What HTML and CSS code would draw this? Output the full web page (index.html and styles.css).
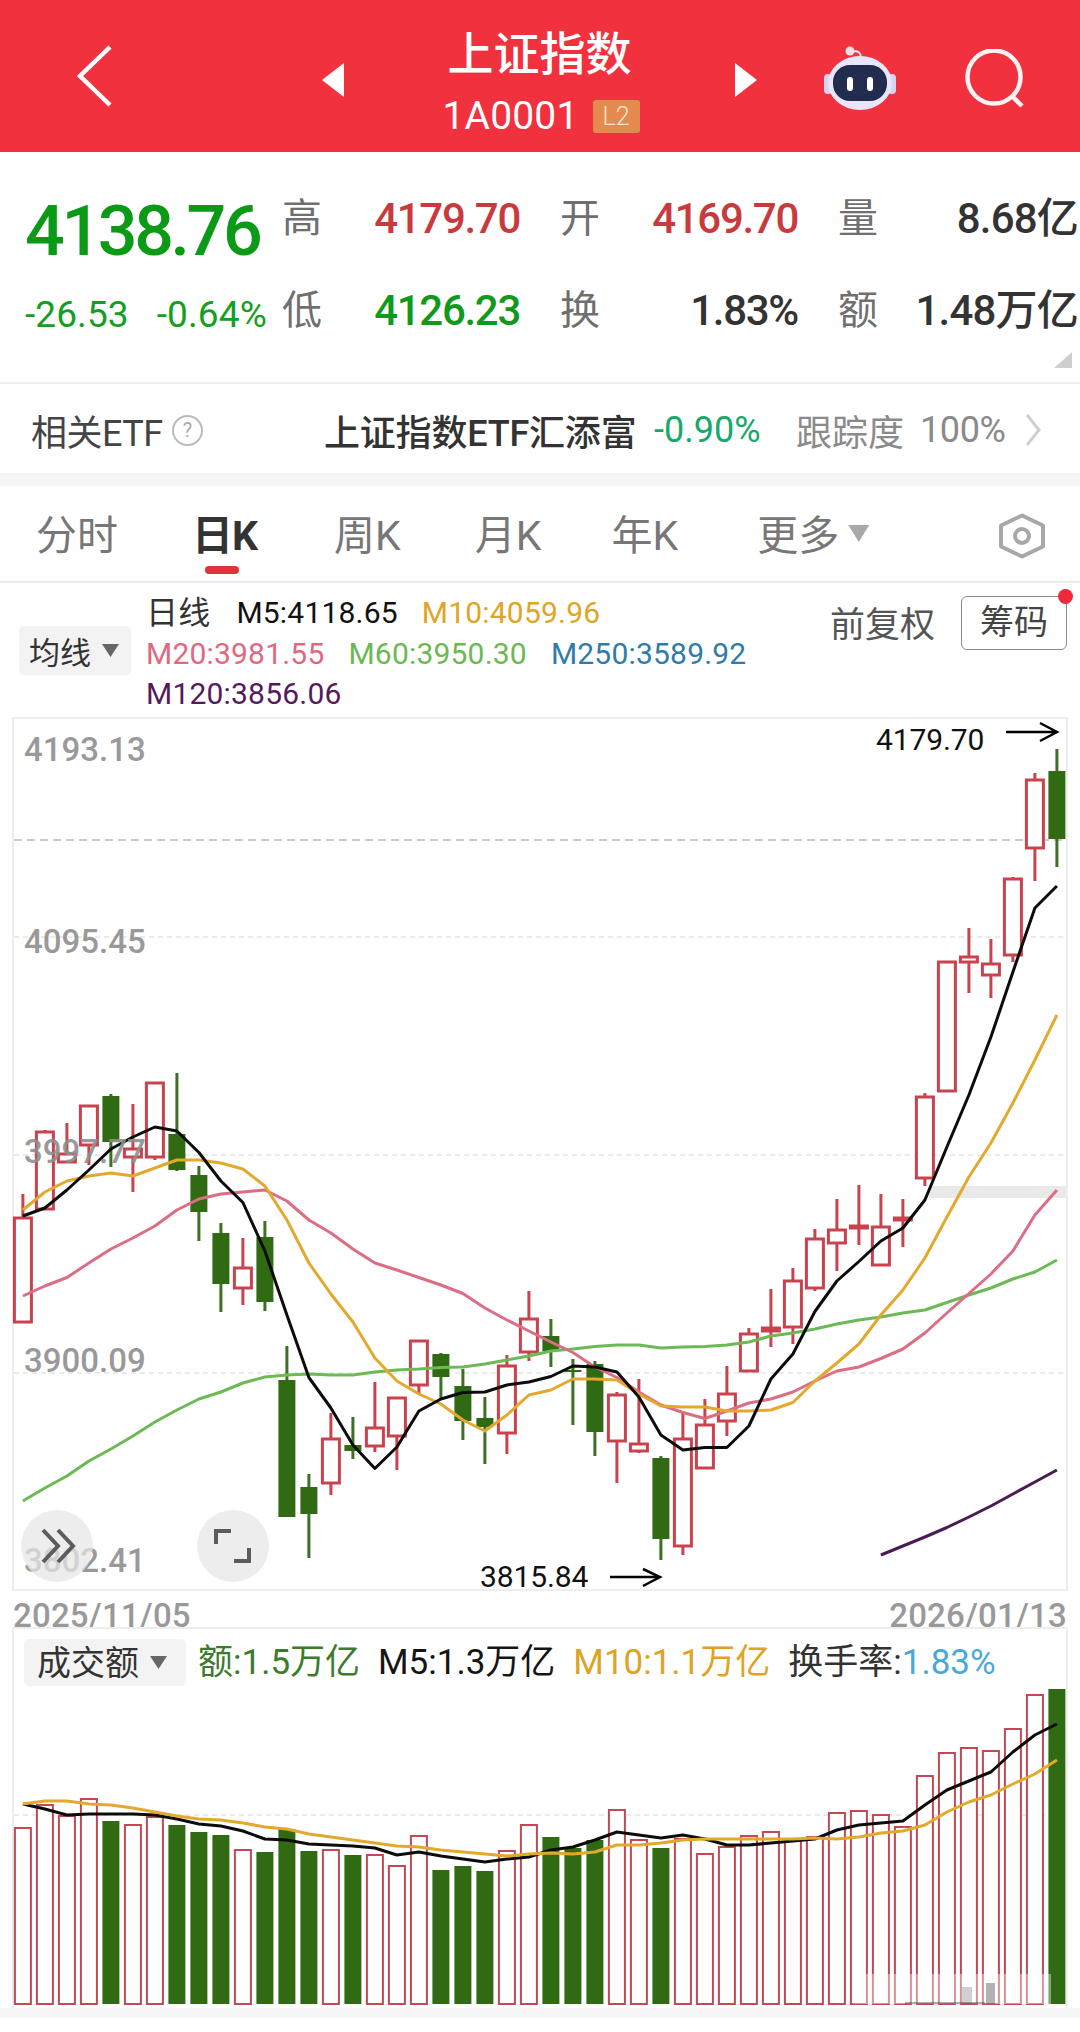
FILE: index.html
```html
<!DOCTYPE html>
<html lang="zh-CN">
<head>
  <meta charset="UTF-8" />
  <meta name="viewport" content="width=device-width, initial-scale=1.0" />
  <title>上证指数 1A0001</title>
  <link rel="stylesheet" href="styles.css">
</head>
<body>
  <header class="topbar">
    <svg class="back-icon" width="35" height="62" viewBox="0 0 35 62"><path d="M33 2 L3 31 L33 60" /></svg>
    <span class="nav-tri nav-tri-left"></span>
    <div class="title-box">
      <div class="title">上证指数</div>
      <div class="subtitle"><span>1A0001</span><span class="badge">L2</span></div>
    </div>
    <span class="nav-tri nav-tri-right"></span>
    <svg class="robot-icon" width="72" height="64" viewBox="0 0 72 64">
      <path d="M28 6 q9 -3 9 7" fill="none" stroke="#f1e9f2" stroke-width="2" />
      <circle cx="26" cy="5" r="4.5" fill="#f3dfe6" />
      <rect x="0" y="28" width="8" height="20" rx="4" fill="#d9d3f2" />
      <rect x="64" y="28" width="8" height="20" rx="4" fill="#d9d3f2" />
      <ellipse cx="36" cy="37" rx="32" ry="27" fill="#e9e6fa" />
      <rect x="9" y="19" width="54" height="36" rx="17" fill="#212c4f" />
      <rect x="23" y="31" width="6" height="14" rx="3" fill="#fff" />
      <rect x="43" y="31" width="6" height="14" rx="3" fill="#fff" />
    </svg>
    <svg class="search-icon" width="60" height="60" viewBox="0 0 60 60">
      <circle cx="29" cy="28" r="26.5" />
      <path d="M47 47 L57 57" />
    </svg>
  </header>

  <section class="quote">
    <div class="price-box">
      <div class="price">4138.76</div>
      <div class="change"><span>-26.53</span><span>-0.64%</span></div>
    </div>
    <div class="stats">
      <div class="stat"><span class="stat-name">高</span><span class="up">4179.70</span></div>
      <div class="stat"><span class="stat-name">开</span><span class="up">4169.70</span></div>
      <div class="stat stat-wide"><span class="stat-name">量</span><span>8.68亿</span></div>
      <div class="stat"><span class="stat-name">低</span><span class="down">4126.23</span></div>
      <div class="stat"><span class="stat-name">换</span><span>1.83%</span></div>
      <div class="stat stat-wide"><span class="stat-name">额</span><span>1.48万亿</span></div>
    </div>
    <span class="corner-tri"></span>
  </section>

  <section class="etf">
    <span class="etf-label">相关ETF</span>
    <span class="help">?</span>
    <span class="etf-name">上证指数ETF汇添富</span>
    <span class="etf-change">-0.90%</span>
    <span class="etf-track">跟踪度</span>
    <span class="etf-track etf-pct">100%</span>
    <svg class="etf-arrow" width="16" height="32" viewBox="0 0 16 32"><path d="M2 1 L14 16 L2 31" /></svg>
  </section>

  <nav class="tabs">
    <span class="tab tab-time">分时</span>
    <span class="tab tab-active">日K</span>
    <span class="tab tab-week">周K</span>
    <span class="tab tab-month">月K</span>
    <span class="tab tab-year">年K</span>
    <span class="tab tab-more">更多</span>
    <span class="more-tri"></span>
    <svg class="gear-icon" width="46" height="46" viewBox="0 0 46 46">
      <path d="M23 2.5 L44 12.5 L44 33.5 L23 43.5 L2 33.5 L2 12.5 Z" />
      <circle cx="23" cy="23" r="7" />
    </svg>
  </nav>

  <section class="legend">
    <div class="pill pill-ma">均线<span class="pill-tri"></span></div>
    <div class="ma-list">
      <div class="ma-row"><span class="ma-day">日线</span><span class="ma5">M5:4118.65</span><span class="ma10">M10:4059.96</span></div>
      <div class="ma-row"><span class="ma20">M20:3981.55</span><span class="ma60">M60:3950.30</span><span class="ma250">M250:3589.92</span></div>
      <div class="ma-row"><span class="ma120">M120:3856.06</span></div>
    </div>
    <span class="adjust">前复权</span>
    <span class="chip-btn">筹码<i class="red-dot"></i></span>
  </section>

  <div class="chart-box kline-box">
    <svg id="kline" width="1052" height="870" viewBox="14 719 1052 870">
      <rect x="929" y="1186" width="137" height="12" fill="#e9e9e9" />
      <path class="grid" d="M14 937H1066M14 1155H1066M14 1373H1066" />
      <path class="grid-close" d="M14 840H1066" />
      <g id="candles"></g>
      <g id="kline-lines"></g>
      <g class="axis-labels">
        <text x="24" y="761">4193.13</text>
        <text x="24" y="953">4095.45</text>
        <text x="24" y="1163">3997.77</text>
        <text x="24" y="1372">3900.09</text>
        <text x="24" y="1572">3802.41</text>
      </g>
      <text class="mark" x="876" y="750">4179.70</text>
      <path class="mark-arrow" d="M1006 732H1057M1040 723L1057 732L1040 741" />
      <text class="mark" x="480" y="1587">3815.84</text>
      <path class="mark-arrow" d="M610 1577H660M643 1569L660 1577L643 1586" />
      <circle class="float-btn" cx="57" cy="1546" r="36" />
      <path class="float-icon" d="M43 1530L58 1546L43 1562M58 1530L73 1546L58 1562" />
      <circle class="float-btn" cx="233" cy="1546" r="36" />
      <path class="float-icon" d="M216 1544V1531H231M249 1548V1561H234" />
    </svg>
  </div>

  <div class="dates"><span>2025/11/05</span><span>2026/01/13</span></div>

  <div class="chart-box vol-box">
    <div class="vol-legend">
      <div class="pill pill-vol">成交额<span class="pill-tri"></span></div>
      <span class="vol-amount">额:1.5万亿</span>
      <span class="vol-m5">M5:1.3万亿</span>
      <span class="vol-m10">M10:1.1万亿</span>
      <span class="vol-rate">换手率:<em>1.83%</em></span>
    </div>
    <svg id="volume" width="1052" height="318" viewBox="14 1690 1052 318">
      <path class="grid" d="M14 1818H1046" />
      <g id="bars"></g>
      <g id="volume-lines"></g>
      <g class="smudge">
        <rect x="853" y="1977" width="198" height="30" fill="#fff" opacity="0.4" />
        <rect x="962" y="1990" width="10" height="17" fill="#444" opacity="0.25" />
        <rect x="986" y="1986" width="9" height="21" fill="#222" opacity="0.35" />
        <rect x="905" y="2005" width="80" height="2" fill="#333" opacity="0.4" />
      </g>
    </svg>
  </div>
  <div class="bottom-strip"></div>

  <script src="chart.js"></script>
</body>
</html>
```

FILE: styles.css
```css
* {
  margin: 0;
  padding: 0;
  box-sizing: border-box;
}

body {
  width: 1080px;
  height: 2032px;
  background: #fff;
  font-family: Roboto, "Noto Sans CJK SC", sans-serif;
  color: #333;
  overflow: hidden;
}

/* top red bar */
.topbar {
  height: 152px;
  background: #f2313e;
  display: flex;
  align-items: center;
}

.back-icon {
  margin-left: 77px;
}

.back-icon path {
  fill: none;
  stroke: #fff;
  stroke-width: 4.5;
}

.nav-tri {
  width: 22px;
  height: 34px;
  margin-top: 8px;
  background: #fff;
}

.nav-tri-left {
  margin-left: 210px;
  clip-path: polygon(100% 0, 0 50%, 100% 100%);
}

.nav-tri-right {
  clip-path: polygon(0 0, 100% 50%, 0 100%);
}

.title-box {
  align-self: flex-start;
  width: 391px;
  padding-top: 29px;
  color: #fff;
  text-align: center;
}

.title {
  font-size: 46px;
  font-weight: 500;
  line-height: 50px;
}

.subtitle {
  display: flex;
  justify-content: center;
  align-items: center;
  gap: 14px;
  margin: 19px 0 0 3px;
  font-size: 39px;
  line-height: 36px;
  letter-spacing: 0.2px;
}

.badge {
  width: 47px;
  height: 33px;
  background: #e58a4e;
  color: #fde6cf;
  border-radius: 3px;
  font-size: 25px;
  font-weight: 300;
  line-height: 33px;
  letter-spacing: 0;
}

.robot-icon {
  margin-left: 67px;
  margin-top: 4px;
}

.search-icon {
  margin-left: 69px;
  margin-top: 6px;
}

.search-icon circle,
.search-icon path {
  fill: none;
  stroke: #fff2f2;
  stroke-width: 4.5;
}

/* quote block */
.quote {
  position: relative;
  height: 232px;
  border-bottom: 2px solid #efefef;
  display: flex;
  padding: 47px 0 0 25px;
}

.price-box {
  width: 257px;
}

.price {
  font-size: 70px;
  font-weight: 500;
  line-height: 70px;
  letter-spacing: -3.4px;
  color: #0b9a16;
  margin-top: -3px;
}

.change {
  display: flex;
  gap: 28px;
  margin-top: 29px;
  font-size: 37px;
  line-height: 40px;
  letter-spacing: 0.1px;
  color: #12a01e;
  white-space: nowrap;
}

.stats {
  display: grid;
  grid-template-columns: 238px 238px 240px;
  grid-template-rows: 40px 40px;
  column-gap: 40px;
  row-gap: 52px;
}

.stat {
  display: flex;
  justify-content: space-between;
  align-items: center;
  font-size: 42px;
  font-weight: 500;
  line-height: 40px;
  letter-spacing: -1.3px;
  white-space: nowrap;
}

.stat-wide {
  letter-spacing: -0.8px;
}

.stat-name {
  font-size: 40px;
  font-weight: 400;
  letter-spacing: 0;
  color: #6f6f6f;
}

.up {
  color: #c83a3c;
}

.down {
  color: #0f9a1c;
}

.corner-tri {
  position: absolute;
  right: 8px;
  bottom: 14px;
  width: 18px;
  height: 16px;
  background: #cfcfcf;
  clip-path: polygon(100% 0, 100% 100%, 0 100%);
}

/* related etf row */
.etf {
  height: 102px;
  border-bottom: 13px solid #f6f6f6;
  display: flex;
  align-items: center;
  padding: 3px 0 0 31px;
  font-size: 36px;
  white-space: nowrap;
}

.etf-label {
  width: 134px;
  color: #444;
  letter-spacing: -0.5px;
}

.help {
  width: 31px;
  height: 31px;
  margin-left: 7px;
  border: 2px solid #bbb;
  border-radius: 50%;
  color: #aaa;
  font-size: 20px;
  line-height: 27px;
  text-align: center;
}

.etf-name {
  width: 318px;
  margin-left: 121px;
  color: #333;
  font-size: 36px;
  font-weight: 500;
  letter-spacing: -0.2px;
}

.etf-change {
  width: 142px;
  margin-left: 12px;
  color: #17a86b;
}

.etf-track {
  color: #8a8a8a;
}

.etf-pct {
  margin-left: 16px;
  letter-spacing: -0.4px;
}

.etf-arrow {
  margin-left: 20px;
}

.etf-arrow path {
  fill: none;
  stroke: #cfcfcf;
  stroke-width: 3;
}

/* period tabs */
.tabs {
  position: relative;
  height: 97px;
  border-bottom: 2px solid #ececec;
  display: flex;
  align-items: center;
  font-size: 41px;
  color: #777;
  padding-top: 4px;
}

.tab {
  line-height: 40px;
  white-space: nowrap;
}

.tab-time { margin-left: 36px; }
.tab-week { margin-left: 77px; }
.tab-month { margin-left: 74px; }
.tab-year { margin-left: 70px; }
.tab-more { margin-left: 79px; }

.tab-active {
  position: relative;
  margin-left: 74px;
  color: #333;
  font-weight: 700;
  letter-spacing: -1px;
}

.tab-active::after {
  content: "";
  position: absolute;
  left: 13px;
  bottom: -18px;
  width: 34px;
  height: 8px;
  border-radius: 4px;
  background: #e2323a;
}

.more-tri {
  width: 21px;
  height: 17px;
  margin-left: 9px;
  margin-top: -4px;
  background: #a9a9a9;
  clip-path: polygon(0 0, 100% 0, 50% 100%);
}

.gear-icon {
  margin-left: 130px;
}

.gear-icon path,
.gear-icon circle {
  fill: none;
  stroke: #a8a8a8;
  stroke-width: 4;
  stroke-linejoin: round;
}

/* moving average legend */
.legend {
  height: 134px;
  display: flex;
  padding-top: 10px;
}

.pill {
  display: flex;
  align-items: center;
  background: #f3f3f3;
  border-radius: 5px;
  color: #333;
}

.pill-ma {
  width: 112px;
  height: 49px;
  margin: 33px 0 0 19px;
  padding-left: 10px;
  font-size: 31px;
}

.pill-tri {
  width: 17px;
  height: 13px;
  margin-left: 11px;
  background: #666;
  clip-path: polygon(0 0, 100% 0, 50% 100%);
}

.ma-list {
  width: 684px;
  margin-left: 15px;
}

.ma-row {
  display: flex;
  gap: 24px;
  font-size: 30px;
  line-height: 40.5px;
  letter-spacing: 0.2px;
  white-space: nowrap;
}

.ma-day { color: #333; font-size: 32px; margin-right: 2px; }
.ma5 { color: #111; }
.ma10 { color: #e0a524; }
.ma20 { color: #e2687f; }
.ma60 { color: #6cb852; }
.ma250 { color: #2f7ca8; }
.ma120 { color: #561a5c; }

.adjust {
  margin-top: 15px;
  font-size: 35px;
  line-height: 36px;
  color: #555;
  white-space: nowrap;
}

.chip-btn {
  position: relative;
  width: 106px;
  height: 54px;
  margin: 3px 0 0 26px;
  border: 1.5px solid #8a8a8a;
  border-radius: 6px;
  font-size: 34px;
  line-height: 50px;
  text-align: center;
  color: #444;
}

.red-dot {
  position: absolute;
  top: -8px;
  right: -7px;
  width: 15px;
  height: 15px;
  border-radius: 50%;
  background: #ee2a38;
}

/* chart panels */
.chart-box {
  margin: 0 12px;
  border: 2px solid #eee;
}

.kline-box {
  height: 874px;
}

.chart-box svg {
  display: block;
  overflow: visible;
}

.grid {
  fill: none;
  stroke: #e3e3e3;
  stroke-width: 1.5;
  stroke-dasharray: 5 4;
}

.grid-close {
  fill: none;
  stroke: #b9bcab;
  stroke-width: 1.5;
  stroke-dasharray: 8 5;
}

.candle-up,
.bar-up {
  fill: #fff;
}

.candle-up {
  stroke: #c8434e;
  stroke-width: 3;
}

.bar-up {
  stroke: #c34754;
  stroke-width: 2;
}

.candle-down,
.bar-down {
  fill: #306b14;
}

.wick-up {
  stroke: #c8434e;
  stroke-width: 3;
}

.wick-down {
  stroke: #3d6f27;
  stroke-width: 3;
}

.ma-line {
  fill: none;
  stroke-width: 3;
  stroke-linejoin: round;
}

.axis-labels text {
  font-size: 33px;
  font-weight: 500;
  fill: #8f8f8f;
  opacity: 0.9;
}

.mark {
  font-size: 30px;
  fill: #111;
  letter-spacing: -0.1px;
}

.mark-arrow {
  fill: none;
  stroke: #000;
  stroke-width: 2.5;
}

.float-btn {
  fill: #e6e6e6;
  opacity: 0.72;
}

.float-icon {
  fill: none;
  stroke: #5c5c5c;
  stroke-width: 4;
}

.dates {
  height: 36px;
  padding: 0 13px;
  display: flex;
  justify-content: space-between;
  font-size: 33px;
  font-weight: 500;
  line-height: 50px;
  letter-spacing: 0.2px;
  color: #999;
}

.vol-box {
  position: relative;
  height: 381px;
  border-bottom: none;
}

.vol-legend {
  height: 58px;
  padding-top: 10px;
  display: flex;
  gap: 18px;
  align-items: flex-start;
  font-size: 35px;
  line-height: 48px;
  white-space: nowrap;
}

.pill-vol {
  width: 162px;
  height: 47px;
  margin-left: 10px;
  margin-right: -6px;
  padding-left: 13px;
  font-size: 34px;
}

.vol-amount { color: #3c7a2c; }
.vol-m5 { color: #151515; }
.vol-m10 { color: #dfa324; }
.vol-rate { color: #333; }

.vol-rate em {
  font-style: normal;
  color: #4aa8d8;
}

.bottom-strip {
  height: 10px;
  background: #f6f6f6;
}
```

FILE: chart.js
```js
// all y values are page pixels, so the sampled data lines up with the layout
const X0 = 22.9;
const STEP = 22;
const BODY = 17;
const SVG_NS = "http://www.w3.org/2000/svg";

const xAt = (i) => X0 + STEP * i;

// [up?, high, bodyTop, bodyBottom, low]
const candles = [
  [1, 1194, 1218, 1322, 1322], [1, 1130, 1132, 1209, 1209], [1, 1123, 1154, 1162, 1162],
  [1, 1106, 1106, 1145, 1165], [0, 1094, 1096, 1142, 1167], [1, 1104, 1149, 1157, 1192],
  [1, 1082, 1083, 1157, 1160], [0, 1073, 1134, 1170, 1171], [0, 1166, 1175, 1212, 1241],
  [0, 1223, 1233, 1284, 1312], [1, 1238, 1268, 1288, 1305], [0, 1221, 1237, 1302, 1311],
  [0, 1346, 1380, 1517, 1517], [0, 1474, 1487, 1514, 1558], [1, 1413, 1439, 1483, 1495],
  [0, 1417, 1445, 1451, 1459], [1, 1382, 1428, 1446, 1452], [1, 1398, 1398, 1436, 1470],
  [1, 1341, 1341, 1385, 1394], [0, 1353, 1354, 1377, 1399], [0, 1369, 1386, 1421, 1440],
  [0, 1397, 1418, 1427, 1464], [1, 1355, 1366, 1433, 1454], [1, 1291, 1319, 1352, 1361],
  [0, 1319, 1336, 1351, 1367], [0, 1359, 1370, 1372, 1425], [0, 1361, 1364, 1432, 1456],
  [1, 1392, 1395, 1441, 1483], [1, 1379, 1444, 1451, 1453], [0, 1456, 1458, 1539, 1560],
  [1, 1413, 1439, 1546, 1555], [1, 1399, 1425, 1468, 1469], [1, 1366, 1394, 1421, 1436],
  [1, 1328, 1334, 1371, 1371], [1, 1289, 1328, 1331, 1347], [1, 1268, 1281, 1327, 1344],
  [1, 1229, 1239, 1288, 1291], [1, 1199, 1230, 1243, 1271], [1, 1185, 1226, 1228, 1245],
  [1, 1194, 1227, 1265, 1266], [1, 1199, 1218, 1220, 1247], [1, 1093, 1097, 1178, 1186],
  [1, 962, 962, 1091, 1092], [1, 928, 957, 962, 993], [1, 939, 964, 975, 998],
  [1, 877, 879, 955, 962], [1, 773, 780, 848, 881], [0, 749, 771, 839, 867],
];

const klineLines = [
  {
    color: "#6cba55",
    points: [1501, 1488, 1476, 1461, 1449, 1436, 1422, 1410, 1399, 1392, 1383, 1377, 1375, 1374, 1375, 1375,
      1372, 1370, 1369, 1367.5, 1367, 1364, 1360, 1356, 1351, 1349, 1346.5, 1345, 1345, 1348, 1347, 1346.5,
      1345, 1342, 1336, 1333, 1329, 1324, 1320, 1317, 1313, 1310, 1302.5, 1295, 1288, 1279, 1272, 1260],
  },
  {
    color: "#dd6d85",
    points: [1296, 1286, 1277.5, 1263, 1249, 1238, 1226, 1210, 1199, 1194, 1192, 1190, 1201, 1220, 1233, 1249,
      1263, 1270, 1277.5, 1285, 1293.5, 1308, 1320, 1331, 1342, 1352.5, 1367, 1377.5, 1392, 1405, 1412.5, 1418.5,
      1411, 1403, 1399, 1392, 1381, 1371, 1367, 1358.5, 1349, 1333, 1313, 1293.5, 1274, 1251, 1215, 1190],
  },
  {
    color: "#e3a92d",
    points: [1210, 1192, 1181, 1176, 1173, 1176, 1168, 1160, 1160, 1163, 1169, 1186, 1220, 1263, 1294, 1322,
      1358, 1381, 1394, 1404, 1420, 1431, 1415, 1395, 1390, 1379, 1379, 1380, 1394, 1406, 1407, 1407,
      1411, 1411, 1410, 1402.5, 1381, 1363, 1344, 1315, 1290, 1258, 1217, 1177, 1143, 1103, 1060, 1015],
  },
  {
    color: "#0c0c0c",
    points: [1216, 1208, 1190, 1170, 1149, 1137, 1127, 1131, 1152.5, 1181, 1202.5, 1251, 1315, 1377.5, 1408, 1445,
      1468.5, 1447, 1411, 1399, 1392.5, 1392, 1385, 1382, 1376.5, 1366, 1367, 1372, 1397, 1435, 1450, 1447.5,
      1447.5, 1426, 1379, 1354, 1311.5, 1281, 1261.5, 1241, 1228, 1200, 1147, 1095, 1037, 972, 908, 886],
  },
  {
    color: "#4a1b55",
    start: 39,
    points: [1555, 1546, 1537, 1527.5, 1517, 1506, 1494, 1482, 1470],
  },
];

// [up?, top]
const bars = [
  [1, 1831], [1, 1808], [1, 1819], [1, 1802], [0, 1824], [1, 1828], [1, 1820], [0, 1828],
  [0, 1835], [0, 1838], [1, 1853], [0, 1855], [0, 1832], [0, 1854], [1, 1853], [0, 1858],
  [1, 1858], [1, 1869], [1, 1839], [0, 1873], [0, 1869], [0, 1874], [1, 1854], [1, 1828],
  [0, 1840], [0, 1851], [0, 1843], [1, 1813], [1, 1843], [0, 1851], [1, 1842], [1, 1857],
  [1, 1850], [1, 1839], [1, 1835], [1, 1843], [1, 1840], [1, 1816], [1, 1814], [1, 1818],
  [1, 1830], [1, 1779], [1, 1756], [1, 1751], [1, 1754], [1, 1732], [1, 1698], [0, 1692],
];
const BAR_BOTTOM = 2007;

const volumeLines = [
  {
    color: "#0c0c0c",
    points: [1807, 1812, 1818, 1817, 1817, 1817, 1818, 1822, 1827, 1829, 1834, 1842, 1843, 1847, 1848, 1849,
      1851, 1858, 1855, 1859, 1862, 1865, 1862, 1860, 1853, 1850, 1843, 1835, 1838, 1841, 1838, 1842,
      1848, 1848, 1846, 1844, 1842, 1833, 1828, 1826, 1824, 1808, 1793, 1784, 1775, 1755, 1738, 1727],
  },
  {
    color: "#e3a92d",
    points: [1807, 1804, 1804, 1807, 1808, 1811, 1815, 1819, 1822, 1823, 1826, 1830, 1832, 1837, 1840, 1843,
      1846, 1849, 1850, 1853, 1855, 1857, 1859, 1857, 1856, 1857, 1855, 1848, 1848, 1846, 1843, 1842,
      1842, 1842, 1842, 1842, 1841, 1842, 1840, 1836, 1834, 1828, 1815, 1805, 1798, 1787, 1777, 1763],
  },
];

function add(parent, tag, attrs) {
  const el = document.createElementNS(SVG_NS, tag);
  for (const key in attrs) el.setAttribute(key, attrs[key]);
  parent.appendChild(el);
}

function drawCandles() {
  const g = document.getElementById("candles");
  candles.forEach(([up, high, top, bottom, low], i) => {
    const x = xAt(i);
    add(g, "line", { x1: x, x2: x, y1: high, y2: low, class: up ? "wick-up" : "wick-down" });
    if (up) {
      // a flat day still shows as a short bar
      add(g, "rect", { x: x - BODY / 2, y: top, width: BODY, height: Math.max(bottom - top, 2), class: "candle-up" });
    } else {
      add(g, "rect", { x: x - BODY / 2, y: top, width: BODY, height: bottom - top, class: "candle-down" });
    }
  });
}

function drawBars() {
  const g = document.getElementById("bars");
  bars.forEach(([up, top], i) => {
    const inset = up ? 0.5 : 0;
    add(g, "rect", {
      x: xAt(i) - BODY / 2 + inset,
      y: top,
      width: BODY - inset * 2,
      height: BAR_BOTTOM - top,
      class: up ? "bar-up" : "bar-down",
    });
  });
}

function drawLines(id, lines) {
  const g = document.getElementById(id);
  lines.forEach((line) => {
    const start = line.start || 0;
    const pts = line.points.map((y, i) => xAt(start + i) + "," + y).join(" ");
    add(g, "polyline", { points: pts, stroke: line.color, class: "ma-line" });
  });
}

drawCandles();
drawBars();
drawLines("kline-lines", klineLines);
drawLines("volume-lines", volumeLines);
```
